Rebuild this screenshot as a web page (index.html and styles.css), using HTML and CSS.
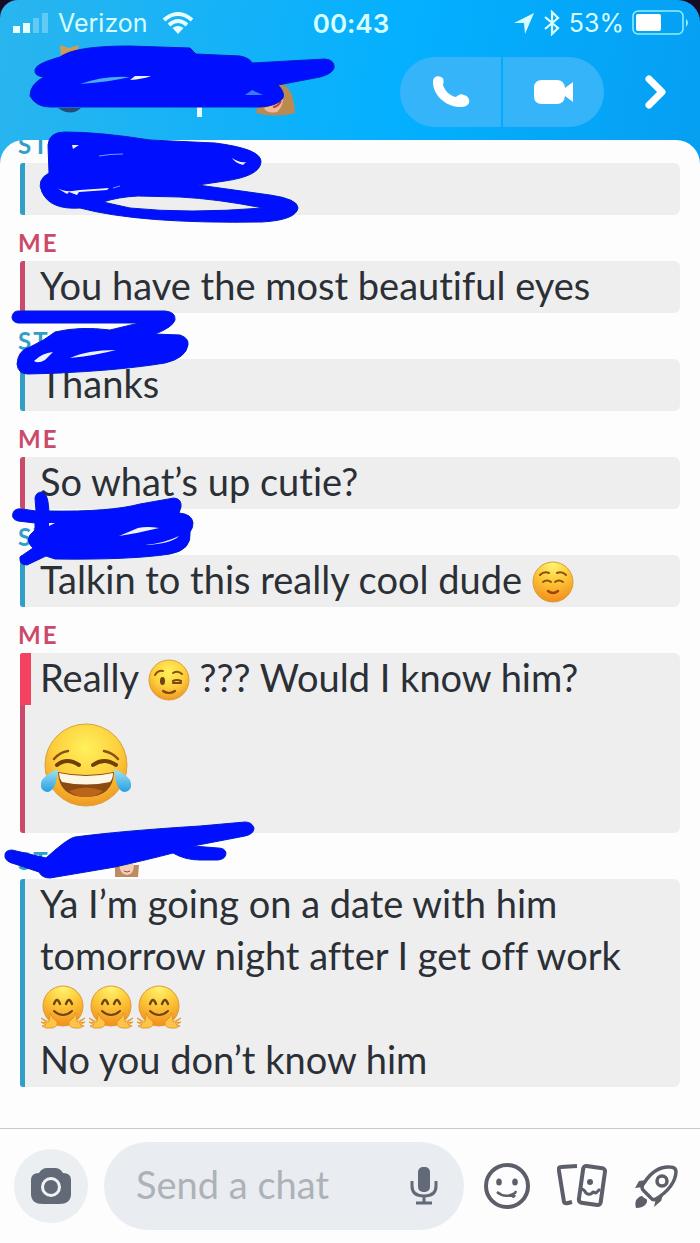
FILE: index.html
```html
<!DOCTYPE html>
<html lang="en">
<head>
<meta charset="utf-8">
<meta name="viewport" content="width=device-width, initial-scale=1">
<title>Chat</title>
<link rel="stylesheet" href="styles.css">
</head>
<body>
<svg class="defs" aria-hidden="true">
  <defs>
    <radialGradient id="face" cx="50%" cy="30%" r="72%">
      <stop offset="0" stop-color="#fff15c"/><stop offset=".55" stop-color="#fdcf3d"/><stop offset="1" stop-color="#ee9420"/>
    </radialGradient>
    <radialGradient id="warm" cx="50%" cy="5%" r="95%">
      <stop offset="0" stop-color="#fff46e"/><stop offset=".5" stop-color="#fcc636"/><stop offset="1" stop-color="#f38d1e"/>
    </radialGradient>
    <linearGradient id="tear" x1="0" y1="0" x2="0" y2="1">
      <stop offset="0" stop-color="#9ce4f8"/><stop offset="1" stop-color="#2a9fe0"/>
    </linearGradient>
    <symbol id="hug" viewBox="0 0 48 46">
      <circle cx="23" cy="22" r="20" fill="url(#warm)" stroke="#dc9b38"/>
      <path d="M14 20q3-8 6 0M26 20q3-8 6 0" fill="none" stroke="#704414" stroke-width="2.4" stroke-linecap="round"/>
      <path d="M14 27q9 8 18 0" fill="none" stroke="#704414" stroke-width="2" stroke-linecap="round"/>
      <path d="M10 29l3 5 4 4q1 5-5 6H6l-4-2 4-1-5-3 6 1-6-5 8 4zM36 29l-3 5-4 4q-1 5 5 6h6l4-2-4-1 5-3-6 1 6-5-8 4z" fill="#ffc646" stroke="#df8b22" stroke-width=".8"/>
    </symbol>
  </defs>
</svg>
<div class="app">
  <header class="header">
    <div class="status">
      <div class="status-left">
        <svg width="38" height="22" viewBox="0 0 38 22" fill="#e8ffff"><path d="M1 14h7v7H1zM11 11h7v10h-7z"/><path opacity=".3" d="M21 6h6v15h-6zM30 1h6v20h-6z"/></svg>
        <span>Verizon</span>
        <svg class="wifi" width="32" height="22" viewBox="0 0 32 22" fill="none" stroke="#e8ffff" stroke-width="4"><path d="M2 8Q16-4 30 8M7 13q9-8 18 0"/><path d="M10.500 16q5.500-4 11 0L16 22z" fill="#e8ffff" stroke="none"/></svg>
      </div>
      <time class="clock">00:43</time>
      <div class="status-right">
        <svg width="22" height="24" viewBox="0 0 22 24" fill="#d8ffff"><path d="M1 12L21 2 12 23l-1-11z"/></svg>
        <svg width="18" height="26" viewBox="0 0 18 26" fill="none" stroke="#d8ffff" stroke-width="2.200"><path d="M2 7l13 11-6 6V2l6 6L2 19"/></svg>
        <span>53%</span>
        <svg class="battery" width="58" height="26" viewBox="0 0 58 26"><rect x="1" y="1" width="50" height="23" rx="5" fill="none" stroke="#8ff0ff" stroke-width="1.500"/><rect x="4" y="4" width="25" height="17" rx="2" fill="#fff"/><path d="M54 9q4 3 0 8z" fill="#8ff0ff"/></svg>
      </div>
    </div>
    <div class="actions">
      <div class="calls">
        <button class="call" aria-label="Voice call"><svg width="38" height="34" viewBox="0 0 38 34"><path d="M1 7C1 2 5 0 9 2c3 1 3 4 2 8 2 6 7 11 13 12 2-2 5-4 8-2 4 1 6 4 5 8-2 4-6 4-10 4C13 31 1 20 1 7z" fill="#fff"/></svg></button>
        <button class="call" aria-label="Video call"><svg width="42" height="28" viewBox="0 0 42 28" fill="#fff"><path d="M9 2h15q7 0 8 8l8-6v20l-8-6q-1 8-8 8H9q-8 0-8-8v-8q0-8 8-8z"/></svg></button>
      </div>
      <button class="next" aria-label="Open profile"><svg width="24" height="38" viewBox="0 0 24 38"><path d="M5 6l13 13L5 32" fill="none" stroke="#fff" stroke-width="7" stroke-linecap="round" stroke-linejoin="round"/></svg></button>
    </div>
  </header>

  <main class="chat">
    <section class="group friend"><h2 class="name">ST</h2><div class="bubble"><p>&nbsp;</p></div></section>
    <section class="group me"><h2 class="name">ME</h2><div class="bubble"><p>You have the most beautiful eyes</p></div></section>
    <section class="group friend"><h2 class="name">ST</h2><div class="bubble"><p>Thanks</p></div></section>
    <section class="group me"><h2 class="name">ME</h2><div class="bubble"><p>So what’s up cutie?</p></div></section>
    <section class="group friend"><h2 class="name">ST</h2><div class="bubble"><p>Talkin to this really cool dude
      <svg class="emoji" viewBox="0 0 42 42" role="img" aria-label="Smiling face"><circle cx="21" cy="21" r="20" fill="url(#warm)" stroke="#d99d3c"/><path d="M8 14q4-4 9-2M25 12q5-2 9 2M11 21q4-3 8 0M23 21q4-3 8 0" fill="none" stroke="#8a5013" stroke-width="2" stroke-linecap="round"/><path d="M16 30q5 4 10 0" fill="none" stroke="#a04310" stroke-width="2.500" stroke-linecap="round"/></svg></p></div></section>
    <section class="group me saved"><h2 class="name">ME</h2><div class="bubble"><p>Really
      <svg class="emoji" viewBox="0 0 42 42" role="img" aria-label="Winking face"><circle cx="21" cy="21" r="20" fill="url(#face)" stroke="#dba23c"/><path d="M7 16q3-5 8-4M25 14q5-3 9 1" fill="none" stroke="#8a5013" stroke-width="2" stroke-linecap="round"/><ellipse cx="14.500" cy="22" rx="2.500" ry="4" fill="#704414"/><path d="M25 22q4-2 8 0M25 24h8M15 32q6 4 12 0" fill="none" stroke="#804612" stroke-width="2.200" stroke-linecap="round"/></svg>
      ??? Would I know him?</p>
      <svg class="emoji-big" viewBox="0 0 92 86" role="img" aria-label="Face with tears of joy"><circle cx="46" cy="43" r="41" fill="url(#face)" stroke="#d9a33a"/><path d="M14 37q6-7 14-8M64 29q9 2 14 8" fill="none" stroke="#8a5013" stroke-width="2.500" stroke-linecap="round"/><path d="M17 43q10-8 22 0M53 43q11-8 23 0" fill="none" stroke="#704008" stroke-width="4" stroke-linecap="round"/><path d="M18 50q28 6 56 0-1 25-28 25T18 50z" fill="#8d4a10"/><path d="M19 51q27 6 54 0 0 6-3 9-24 5-48 0-3-4-3-9z" fill="#fff7e6"/><path d="M29 69q17-7 34 0-7 6-17 6t-17-6z" fill="#b9651b"/><path d="M18 47Q16 70 7 70q-7-1-6-9 1-7 17-14zM74 47q2 23 11 23 7-1 6-9-1-7-17-14z" fill="url(#tear)"/></svg></div></section>
    <section class="group friend"><h2 class="name">ST</h2><div class="bubble"><p>Ya I’m going on a date with him tomorrow night after I get off work</p>
      <p class="hugs"><svg class="hug" role="img" aria-label="Hugging face"><use href="#hug"/></svg><svg class="hug" role="img" aria-label="Hugging face"><use href="#hug"/></svg><svg class="hug" role="img" aria-label="Hugging face"><use href="#hug"/></svg></p>
      <p>No you don’t know him</p></div></section>
  </main>

  <footer class="composer">
    <button class="camera" aria-label="Camera"><svg width="42" height="38" viewBox="0 0 42 38"><path d="M9 6Q12 1 17 1h8q5 0 8 5 8 0 8 7v14q0 10-12 10H13Q1 37 1 27V13q0-7 8-7z" fill="#626977"/><circle cx="21" cy="20" r="8.500" fill="none" stroke="#f0f4f8" stroke-width="3"/></svg></button>
    <div class="field">
      <input class="entry" type="text" placeholder="Send a chat" aria-label="Send a chat">
      <button class="plain" aria-label="Record voice note"><svg width="28" height="42" viewBox="0 0 28 42" fill="none" stroke="#626977" stroke-width="3"><path d="M2 16v5q0 10 12 10t12-10v-5M14 31v7M6 38h16"/><rect x="8" y="2" width="12" height="25" rx="5" fill="#626977" stroke="none"/></svg></button>
    </div>
    <div class="tools">
      <button class="plain" aria-label="Stickers"><svg width="46" height="46" viewBox="0 0 46 46" fill="none" stroke="#5c5f69" stroke-width="4"><circle cx="23" cy="23" r="21"/><ellipse cx="15" cy="19" rx="2.800" ry="3.500" fill="#5c5f69" stroke="none"/><ellipse cx="31" cy="19" rx="2.800" ry="3.500" fill="#5c5f69" stroke="none"/><path d="M13 29q8 7 18 1l1-2M28 31q1 5 3 1" stroke-width="2.500"/></svg></button>
      <button class="plain" aria-label="Cameos"><svg width="50" height="46" viewBox="0 0 50 46" fill="none" stroke="#5c5f69" stroke-width="4" stroke-linejoin="round"><path d="M20 3L4 4q-3 0-2 4l5 31q1 2 4 1l4-1"/><rect x="24" y="4" width="22" height="37" rx="3" transform="rotate(8 35 22)"/><circle cx="33" cy="19" r="3" fill="#5c5f69" stroke="none"/><path d="M24 26q3 0 5 4 4 3 7-1l3 1 4-4" stroke-width="3"/></svg></button>
      <button class="plain" aria-label="Games"><svg width="44" height="46" viewBox="0 0 44 46" fill="none" stroke="#5c5f69" stroke-width="3.500"><path d="M10 20Q21 3 36 4q6 0 6 5-1 15-20 27-3 2-6-2l-6-6q-4-3 0-8z"/><circle cx="28" cy="18" r="5"/><path d="M13 17l-8 1-4 7 8-1zM29 32l-2 6-7 6 2-9z" fill="#5c5f69" stroke="none"/><path d="M4 35q4-4 6 0 5 1 2 6-3 4-10 4-2-7 2-10z" fill="#5c5f69" stroke="none"/></svg></button>
    </div>
  </footer>

  <svg class="scribbles" viewBox="0 0 700 1243" aria-hidden="true">
    <path d="M60 45l9 3 10-3-3 12H61z" fill="#cd9c57"/>
    <path d="M58 108h23q-10 9-23 0z" fill="#244b73"/>
    <path d="M197 106h5v11h-5z" fill="#e5fbff"/>
    <path d="M274 84q19-4 21 29-20 5-39 0l2-8z" fill="#b98a52"/><path d="M280 88q7 15-3 24-10 2-13-4 12-3 16-20z" fill="#f0b99c"/><path d="M273 107q5 0 8-6" stroke="#c5413f" stroke-width="2" fill="none"/>
    <path d="M115 865h24l-1 12h-23z" fill="#bd8a61"/><path d="M119 864h15q0 11-7 11t-8-11z" fill="#f0cdb6"/><path d="M124 871q3 2 6 0" stroke="#a44" fill="none"/>
    <g fill="#0010ff" stroke="#001bd0" fill-rule="evenodd">
      <path d="M35 70C36 64 50 60 60 57c10-7 30-11 70-11l60 2 6 6 44 2q10 2 12 7l73-4q10 1 9 9-2 6-14 9l-42 8q7 7 5 13-5 8-23 9H50q-14 0-20-11 0-12 14-19-10-1-9-7z"/>
      <path d="M48 145q1-13 17-13 35 0 85 8l65 3q47 6 46 19-1 14-36 19l-27 4 72 10q28 4 28 13-2 12-36 14-122 2-182-14-30 2-38-16-6-12 7-19zM103 202q15-5 35-6l42 1q38 2 83 11-75 6-133 0z"/>
      <path d="M18 311h147q11 1 10 9-2 7-20 14l25 1q9 3 8 10-2 13-23 18-55 9-137 11-10 0-11-10 1-14 13-17 15-7 25-15 25-6 55-2l29-7H18q-6-1-6-6 1-6 6-6z"/>
      <path d="M35 498q1-6 7-6 5 2 6 10l1 9q61 1 91-7l34-6q8 1 7 9l-2 6q13 1 14 10 0 5-3 9 2 18-20 22-40 6-115 5l-9-3-19 9q-8 0-7-8l13-9q-7-6-3-13l5-5v-7l-17-2q-7-2-5-8 2-5 9-4l14 2z"/>
      <path d="M12 850q-8 0-7 7 1 5 10 7l24 8q3 6 11 6l65-11q35-8 58-14 12 7 27 7h18q8-1 8-7-1-5-8-5l-25-2 52-10q9-2 9-8-2-6-9-6l-45 4q-80 5-125 11-7 1-29 21z"/>
    </g>
    <g fill="#eef3fb">
      <path d="M80 84q25-9 50-7-20 5-50 7z" fill="#48aaf0"/><path d="M130 80l5-4 16 0q-8 3-21 4z"/><path d="M245 95l7-5 11 5z" fill="#397aff"/>
      <path d="M57 188q8 5 23 2l29-2-2 2-28 2-2 3-8-3-2 2zM72 145h7l-6 4zM232 158q7 5 14 4l-3 3q-8-2-11-7z"/>
      <path d="M34 361q8-8 19-9l-8 8q-7 4-11 1zM70 358q17-8 46-8-18 5-46 8zM49 526v-3h6zM119 536l19-8q9-2 21 0-20 5-40 8zM145 545q20-2 34-9-8 8-34 9z"/>
    </g>
    <path d="M99 156q10-2 24-2M113 188l7-2" stroke="#7698ff" fill="none"/>
  </svg>
</div>
</body>
</html>
```
FILE: styles.css
```css
* { box-sizing: border-box; }

body {
  margin: 0;
  background: #170a24;
  color: #2b2f36;
  font-family: Lato, "Liberation Sans", sans-serif;
  font-variant-ligatures: none;
}

button {
  display: flex;
  align-items: center;
  justify-content: center;
  padding: 0;
  border: 0;
  background: none;
}

.defs { position: absolute; width: 0; height: 0; }

.app {
  position: relative;
  display: flex;
  flex-direction: column;
  height: 100vh;
  overflow: hidden;
  border-radius: 18px 22px 0 0;
  background: linear-gradient(100deg, #2ab5ee 0, #04b0ff 45%, #069cf0 85%);
}

.header { flex: none; padding-bottom: 13px; }

.status {
  display: grid;
  grid-template-columns: 1fr auto 1fr;
  align-items: center;
  height: 46px;
  padding: 0 10px 0 12px;
  color: #d8ffff;
  font-family: Inter, sans-serif;
  font-size: 25px;
}

.status-left, .status-right { display: flex; align-items: center; gap: 8px; }
.wifi { margin-left: 6px; }
.status-right { justify-content: flex-end; }
.clock { font-size: 26px; font-weight: 600; }

.actions {
  display: flex;
  justify-content: flex-end;
  gap: 22px;
  padding: 11px 14px 0 0;
}

.calls {
  display: flex;
  gap: 2px;
  overflow: hidden;
  border-radius: 35px;
}

.call { width: 101px; height: 70px; background: #35b4fa; }
.next { width: 60px; height: 70px; }

.chat {
  display: flex;
  flex: 1;
  flex-direction: column;
  justify-content: flex-end;
  min-height: 0;
  overflow: hidden;
  padding: 0 18px 41px;
  border-radius: 24px 24px 0 0;
  background: #fdfdfd;
}

.group { flex: none; --accent: #2f9fc8; }
.me { --accent: #cb4a69; }

.name {
  margin: 0;
  padding: 14px 0 4px;
  color: var(--accent);
  font-size: 24px;
  font-weight: 700;
  line-height: 28px;
  letter-spacing: 2px;
}

.bubble {
  position: relative;
  display: flow-root;
  margin: 0 2px;
  padding: 0 0 2px 15px;
  border-left: 5px solid var(--accent);
  border-radius: 3px 6px 6px 3px;
  background: #eee;
  font-size: 38px;
  line-height: 52px;
}

.bubble p { margin: 0; }
.bubble p:first-child { margin-top: -2px; }

.saved .bubble::before {
  content: "";
  position: absolute;
  top: 0;
  left: -5px;
  width: 11px;
  height: 52px;
  border-radius: 3px 0 0 0;
  background: #f4415f;
}

.emoji { width: 42px; height: 42px; vertical-align: -9px; }
.emoji-big { display: block; width: 92px; height: 128px; padding-bottom: 4px; }
.hugs { display: flex; align-items: center; height: 52px; }
.hug { width: 48px; height: 46px; }

.composer {
  display: flex;
  flex: none;
  align-items: center;
  gap: 16px;
  padding: 13px 22px 13px 14px;
  border-top: 1px solid #c9cacc;
  background: #fdfdfd;
}

.camera { width: 74px; height: 74px; border-radius: 50%; background: #eceff1; }

.field {
  display: flex;
  flex: 1;
  align-items: center;
  min-width: 0;
  height: 88px;
  padding: 0 26px 0 32px;
  border-radius: 44px;
  background: #e9edf1;
}

.entry {
  flex: 1;
  min-width: 0;
  padding: 0 0 4px;
  border: 0;
  background: none;
  font: 38px Lato, sans-serif;
}

.entry::placeholder { color: #adb2b8; opacity: 1; }

.tools { display: flex; align-items: center; gap: 27px; margin-left: 4px; }

.scribbles {
  position: absolute;
  top: 0;
  left: 0;
  width: 700px;
  height: 1243px;
  pointer-events: none;
}
```
